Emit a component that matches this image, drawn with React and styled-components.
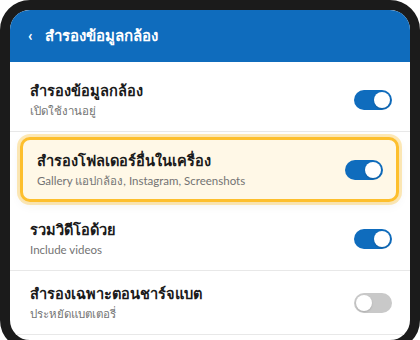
import React, { useState } from "react";
import styled, { createGlobalStyle } from "styled-components";

const GlobalStyle = createGlobalStyle`
  html, body {
    margin: 0;
    padding: 0;
    background: #ffffff;
    overflow: hidden;
  }
  * { box-sizing: border-box; }
`;

const Phone = styled.div`
  width: 420px;
  height: 350px;
  border: 10px solid #1b1b1b;
  border-radius: 30px;
  overflow: hidden;
  background: #ffffff;
  font-family: "Lato", "Noto Sans", sans-serif;
  display: flex;
  flex-direction: column;
`;

const Header = styled.div`
  height: 52px;
  flex-shrink: 0;
  background: #0f6cbd;
  color: #ffffff;
  display: flex;
  align-items: center;
  padding: 0 18px;
  gap: 12px;
`;

const Back = styled.span`
  font-size: 16px;
  font-weight: 700;
  line-height: 1;
  margin-top: -2px;
`;

const HeaderTitle = styled.span`
  font-size: 15px;
  font-weight: 700;
`;

const List = styled.div`
  display: flex;
  flex-direction: column;
  padding-top: 6px;
`;

const Row = styled.div`
  display: flex;
  align-items: center;
  justify-content: space-between;
  height: 64px;
  padding: 0 18px 0 20px;
  border-bottom: 1px solid #e8e8e8;
`;

const FocusRow = styled.div`
  display: flex;
  align-items: center;
  justify-content: space-between;
  height: 65px;
  margin: 5px 11px 5px 10px;
  padding: 0 13px 0 14px;
  background: #fff8e7;
  border: 3px solid #fdbf2d;
  border-radius: 10px;
  box-shadow: 0 0 0 3px rgba(253, 191, 45, 0.35), 0 3px 12px rgba(0, 0, 0, 0.06);
`;

const Texts = styled.div`
  display: flex;
  flex-direction: column;
  gap: 2px;
`;

const Title = styled.span`
  font-size: 14.6px;
  font-weight: 700;
  color: #1a1a1a;
  line-height: 20px;
`;

const Sub = styled.span`
  font-size: 11.5px;
  color: #737373;
  line-height: 16px;
`;

const Track = styled.button`
  position: relative;
  width: 38px;
  height: 20px;
  border: none;
  padding: 0;
  border-radius: 10px;
  background: ${(p) => (p.$on ? "#0f6cbd" : "#c9c9c9")};
  cursor: pointer;
  flex-shrink: 0;
`;

const Knob = styled.span`
  position: absolute;
  top: 2px;
  left: ${(p) => (p.$on ? "20px" : "2px")};
  width: 16px;
  height: 16px;
  border-radius: 50%;
  background: #ffffff;
  box-shadow: 0 1px 2px rgba(0, 0, 0, 0.15);
`;

const Toggle = ({ on, onClick }) => (
  <Track $on={on} onClick={onClick}>
    <Knob $on={on} />
  </Track>
);

const App = () => {
  const [s, setS] = useState({ camera: true, folders: true, videos: true, charging: false });
  const flip = (k) => () => setS({ ...s, [k]: !s[k] });

  return (
    <>
      <GlobalStyle />
      <Phone>
        <Header>
          <Back>‹</Back>
          <HeaderTitle>สำรองข้อมูลกล้อง</HeaderTitle>
        </Header>
        <List>
          <Row>
            <Texts>
              <Title>สำรองข้อมูลกล้อง</Title>
              <Sub>เปิดใช้งานอยู่</Sub>
            </Texts>
            <Toggle on={s.camera} onClick={flip("camera")} />
          </Row>
          <FocusRow>
            <Texts>
              <Title>สำรองโฟลเดอร์อื่นในเครื่อง</Title>
              <Sub>Gallery แอปกล้อง, Instagram, Screenshots</Sub>
            </Texts>
            <Toggle on={s.folders} onClick={flip("folders")} />
          </FocusRow>
          <Row>
            <Texts>
              <Title>รวมวิดีโอด้วย</Title>
              <Sub>Include videos</Sub>
            </Texts>
            <Toggle on={s.videos} onClick={flip("videos")} />
          </Row>
          <Row>
            <Texts>
              <Title>สำรองเฉพาะตอนชาร์จแบต</Title>
              <Sub>ประหยัดแบตเตอรี่</Sub>
            </Texts>
            <Toggle on={s.charging} onClick={flip("charging")} />
          </Row>
        </List>
      </Phone>
    </>
  );
};

export default App;
